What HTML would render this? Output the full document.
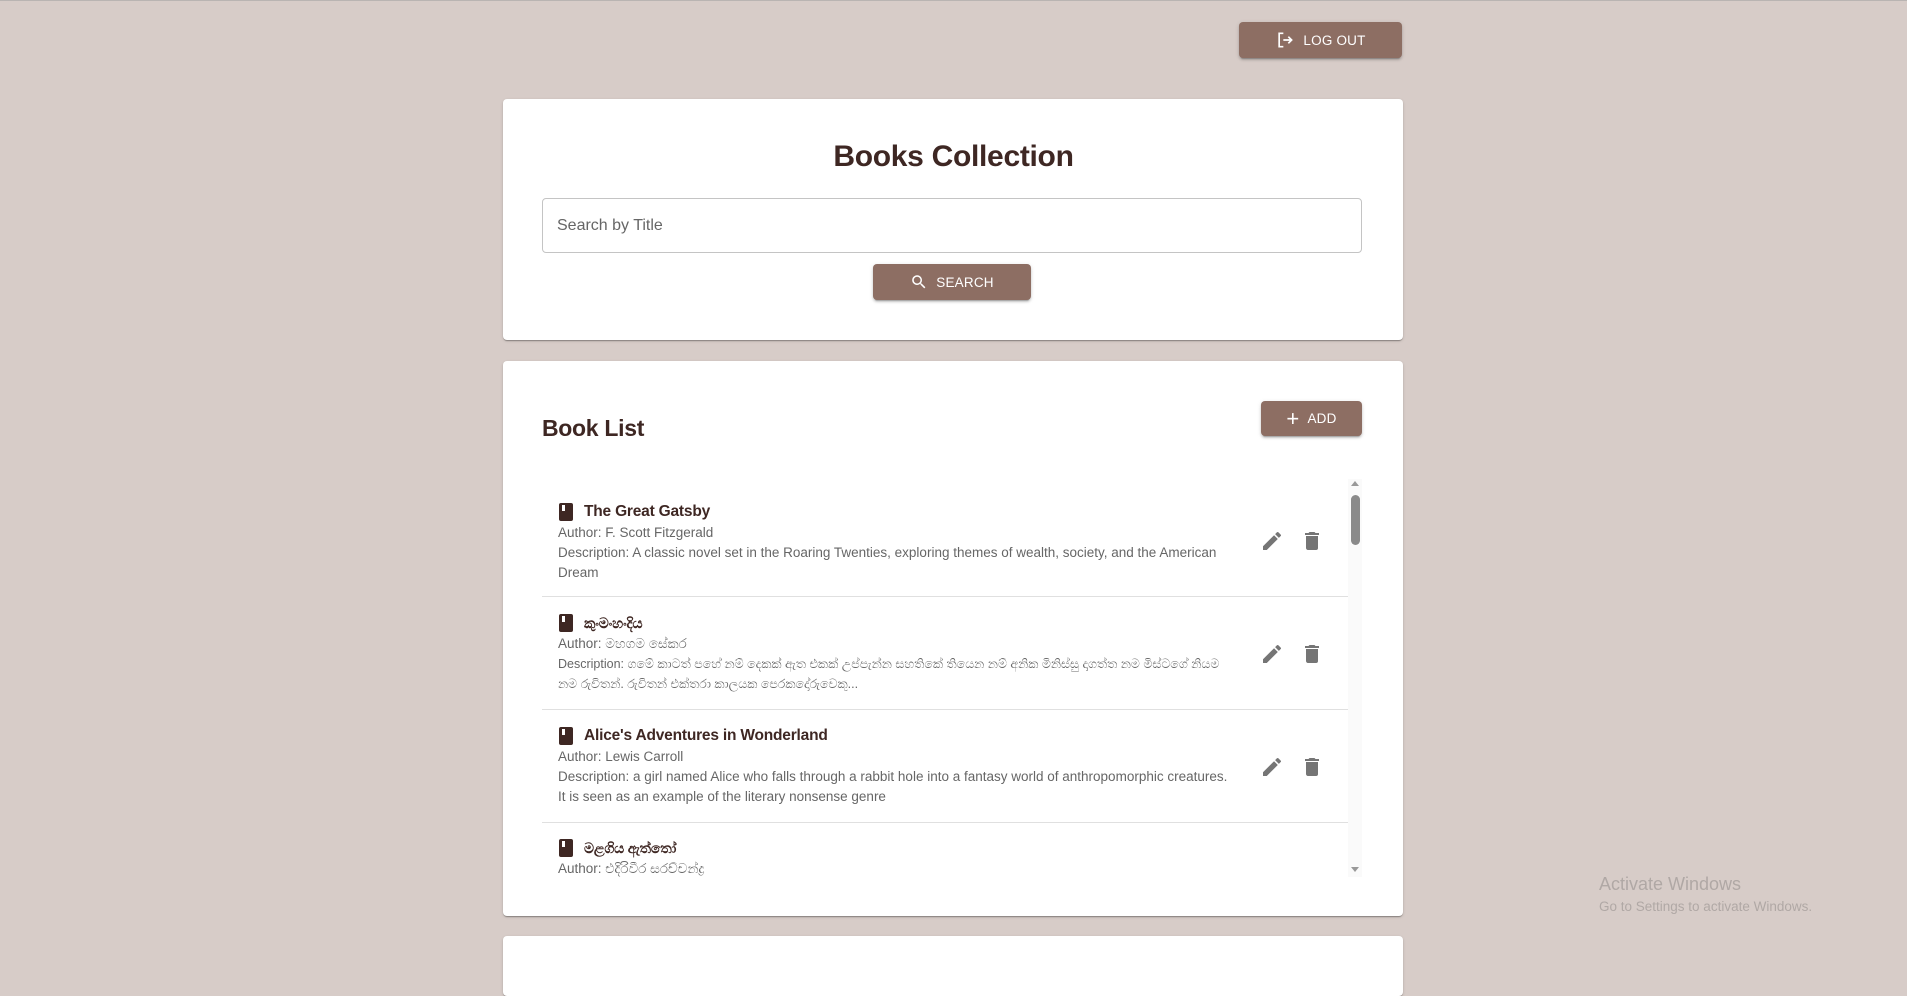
<!DOCTYPE html>
<html><head><meta charset="utf-8"><style>
*{box-sizing:border-box;margin:0;padding:0}
body{width:1907px;height:966px;overflow:hidden;background:#d7ccc8;font-family:"Liberation Sans","Noto Sans CJK SC",sans-serif;position:relative;border-top:1px solid #b9b4b2}
.btn{position:absolute;background:#8d6e63;color:#fff;border-radius:4px;box-shadow:0 3px 1px -2px rgba(0,0,0,.2),0 2px 2px rgba(0,0,0,.14),0 1px 5px rgba(0,0,0,.12);display:flex;align-items:center;justify-content:center;font-size:13.5px;font-weight:500;letter-spacing:.2px;gap:8px}
.card{position:absolute;left:503px;width:900px;background:#fff;border-radius:4px;box-shadow:0 2px 1px -1px rgba(0,0,0,.2),0 1px 1px rgba(0,0,0,.14),0 1px 3px rgba(0,0,0,.12)}
h1{position:absolute;left:0;right:0;top:139px;text-align:center;font-size:30px;color:#3e2723;font-weight:bold;letter-spacing:-.3px}
.input{position:absolute;left:542px;top:197px;width:820px;height:55px;border:1px solid #c4c4c4;border-radius:4px;font-size:16px;color:#666;padding-left:14px;line-height:53px}
h2{position:absolute;left:542px;top:414px;font-size:23px;color:#3e2723;font-weight:bold;letter-spacing:-.3px}
.list{position:absolute;left:542px;top:478px;width:806px;height:398px;overflow:hidden}
.item{position:absolute;left:0;width:806px;border-bottom:1px solid #e0e0e0;padding-left:16px;display:flex;flex-direction:column;justify-content:center}
.t{font-size:15.5px;font-weight:bold;color:#3e2723;line-height:22px;display:flex;align-items:center;gap:10px;letter-spacing:-.2px}
.s{font-size:13.5px;color:#666;line-height:20px;width:680px}
.ic{position:absolute}
.sb{position:absolute;left:1348px;top:478px;width:14px;height:398px;background:#fafafa}
.wm{position:absolute;left:1599px;color:#b0a8a5}
</style></head><body>
<div class="btn" style="left:1239px;top:21px;width:163px;height:36px">
<svg width="20" height="20" viewBox="0 0 24 24" fill="none" stroke="#fff" stroke-width="2"><path d="M10 4H5v16h5"/><path d="M10 12h10M16 8l4 4-4 4"/></svg>LOG OUT</div>
<div class="card" style="top:98px;height:241px"></div>
<h1>Books Collection</h1>
<div class="input">Search by Title</div>
<div class="btn" style="left:873px;top:263px;width:158px;height:36px">
<svg width="18" height="18" viewBox="0 0 24 24" fill="#fff"><path d="M15.5 14h-.8l-.3-.3A6.5 6.5 0 1 0 9.5 16a6.5 6.5 0 0 0 4.2-1.6l.3.3v.8l5 5 1.5-1.5-5-5zm-6 0a4.5 4.5 0 1 1 0-9 4.5 4.5 0 0 1 0 9z"/></svg>SEARCH</div>
<div class="card" style="top:360px;height:555px"></div>
<h2>Book List</h2>
<div class="btn" style="left:1261px;top:400px;width:101px;height:35px"><span style="font-size:22px;font-weight:300;line-height:1">+</span>ADD</div>
<div class="list">
<div class="item" style="top:8px;height:110px"><div class="t"><svg width="16" height="18" viewBox="0 0 16 18"><rect x="1" y="0" width="14" height="18" rx="2" fill="#3e2723"/><rect x="4" y="2" width="3" height="6" fill="#fff"/></svg>The Great Gatsby</div><div class="s">Author: F. Scott Fitzgerald</div><div class="s">Description: A classic novel set in the Roaring Twenties, exploring themes of wealth, society, and the American Dream</div></div>
<div class="item" style="top:118px;height:113px"><div class="t"><svg width="16" height="18" viewBox="0 0 16 18"><rect x="1" y="0" width="14" height="18" rx="2" fill="#3e2723"/><rect x="4" y="2" width="3" height="6" fill="#fff"/></svg><span style="font-size:14px">කුංමංහංදිය</span></div><div class="s">Author: මහගම සේකර</div><div class="s" style="font-size:12.5px">Description: ගමේ කාටත් පහේ නම් දෙකක් ඇත එකක් උප්පැන්න සහතිකේ තියෙන නම් අනික මිනිස්සු දාගත්ත නම මිස්ටගේ නියම නම රුවිතන්. රුවිතන් එක්තරා කාලයක පෙරකදෝරුවෙකු...</div></div>
<div class="item" style="top:231px;height:113px"><div class="t"><svg width="16" height="18" viewBox="0 0 16 18"><rect x="1" y="0" width="14" height="18" rx="2" fill="#3e2723"/><rect x="4" y="2" width="3" height="6" fill="#fff"/></svg>Alice's Adventures in Wonderland</div><div class="s">Author: Lewis Carroll</div><div class="s">Description: a girl named Alice who falls through a rabbit hole into a fantasy world of anthropomorphic creatures. It is seen as an example of the literary nonsense genre</div></div>
<div class="item" style="top:344px;height:113px;justify-content:flex-start;padding-top:14px"><div class="t"><svg width="16" height="18" viewBox="0 0 16 18"><rect x="1" y="0" width="14" height="18" rx="2" fill="#3e2723"/><rect x="4" y="2" width="3" height="6" fill="#fff"/></svg><span style="font-size:14px">මළගිය ඇත්තෝ</span></div><div class="s">Author: එදිරිවීර සරච්චන්ද්‍ර</div></div>
</div>
<svg class="ic" style="left:1260px;top:528px" width="24" height="24" viewBox="0 0 24 24" fill="#757575"><path d="M3 17.25V21h3.75L17.8 9.94l-3.75-3.75L3 17.25zM20.7 7.04a1 1 0 0 0 0-1.41l-2.34-2.34a1 1 0 0 0-1.410 0l-1.83 1.83 3.75 3.75 1.83-1.830z"/></svg>
<svg class="ic" style="left:1300px;top:528px" width="24" height="24" viewBox="0 0 24 24" fill="#757575"><path d="M6 19c0 1.1.9 2 2 2h8a2 2 0 0 0 2-2V7H6v12zM19 4h-3.5l-1-1h-5l-1 1H5v2h14V4z"/></svg>
<svg class="ic" style="left:1260px;top:641px" width="24" height="24" viewBox="0 0 24 24" fill="#757575"><path d="M3 17.25V21h3.75L17.8 9.94l-3.75-3.75L3 17.25zM20.7 7.04a1 1 0 0 0 0-1.41l-2.34-2.34a1 1 0 0 0-1.41 0l-1.83 1.83 3.75 3.75 1.83-1.83z"/></svg>
<svg class="ic" style="left:1300px;top:641px" width="24" height="24" viewBox="0 0 24 24" fill="#757575"><path d="M6 19c0 1.1.9 2 2 2h8a2 2 0 0 0 2-2V7H6v12zM19 4h-3.5l-1-1h-5l-1 1H5v2h14V4z"/></svg>
<svg class="ic" style="left:1260px;top:754px" width="24" height="24" viewBox="0 0 24 24" fill="#757575"><path d="M3 17.25V21h3.75L17.8 9.94l-3.75-3.75L3 17.25zM20.7 7.04a1 1 0 0 0 0-1.41l-2.34-2.34a1 1 0 0 0-1.41 0l-1.83 1.83 3.75 3.75 1.83-1.83z"/></svg>
<svg class="ic" style="left:1300px;top:754px" width="24" height="24" viewBox="0 0 24 24" fill="#757575"><path d="M6 19c0 1.1.9 2 2 2h8a2 2 0 0 0 2-2V7H6v12zM19 4h-3.5l-1-1h-5l-1 1H5v2h14V4z"/></svg>
<div class="sb"><svg style="position:absolute;left:3px;top:2px" width="8" height="5"><path d="M0 5L4 0 8 5z" fill="#999"/></svg><div style="position:absolute;left:3px;top:16px;width:9px;height:50px;background:#8a8a8a;border-radius:5px"></div><svg style="position:absolute;left:3px;top:388px" width="8" height="5"><path d="M0 0L4 5 8 0z" fill="#999"/></svg></div>
<div class="card" style="top:935px;height:60px"></div>
<div class="wm" style="top:873px;font-size:18px">Activate Windows</div>
<div class="wm" style="top:898px;font-size:13.5px">Go to Settings to activate Windows.</div>
</body></html>
